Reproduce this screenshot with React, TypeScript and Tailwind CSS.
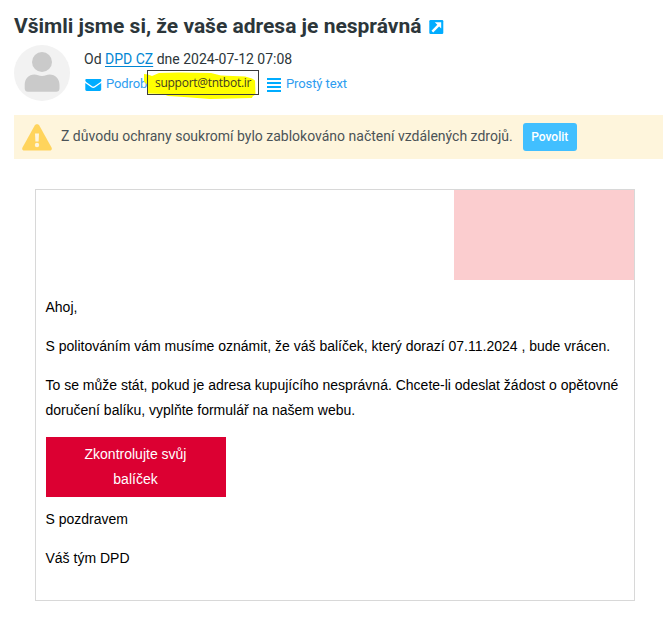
import type { ReactNode } from 'react';

function OpenIcon() {
  return (
    <svg width="15" height="15" viewBox="0 0 15 15" className="shrink-0">
      <rect x="0.3" y="0" width="14" height="14" rx="1.2" fill="#00acff" />
      <path d="M5.800 2.200h6.400v6.400l-2.100-2.100-5.900 5.900-1.700-1.700L8.300 4.700z" fill="#fff" />
    </svg>
  );
}

function Avatar() {
  return (
    <svg width="56" height="56" viewBox="0 0 56 56" className="shrink-0">
      <circle cx="28" cy="28" r="28" fill="#f2f2f2" />
      <circle cx="28" cy="17" r="10" fill="#cacaca" />
      <path
        d="M20.500 29.500c2.500 0 4.500 1.500 7.500 1.500s5-1.500 7.500-1.500C41.500 29.500 45.500 34 45.500 40v3.500c0 2-1.300 3.300-3.300 3.300H14c-2 0-3.300-1.300-3.300-3.300V40c0-6 3.800-10.500 9.800-10.500z"
        fill="#cacaca"
      />
    </svg>
  );
}

function MailIcon() {
  return (
    <svg width="17" height="12" viewBox="0 0 17 12" className="relative top-px shrink-0">
      <path d="M1.500 0h13.500c.9 0 1.400.5 1.400 1.200 0 .7-.5 1.500-1.200 2L9.700 7c-.9.700-2 .7-2.900 0L1.500 3.200C.8 2.700.3 1.900.3 1.300.3.500.8 0 1.500 0z" fill="#00acff" />
      <path d="M.3 4l6 4.200c1.200.9 2.700.9 3.900 0l6-4.200v6.600c0 .8-.6 1.400-1.400 1.400H1.700c-.8 0-1.400-.6-1.400-1.400z" fill="#00acff" />
    </svg>
  );
}

function LinesIcon() {
  return (
    <svg width="14" height="14" viewBox="0 0 14 14" className="relative top-px shrink-0">
      <path d="M0 0h14v2H0zM0 4h14v2H0zM0 8h14v2H0zM0 12h14v2H0z" fill="#00acff" />
    </svg>
  );
}

function WarningIcon() {
  return (
    <svg width="30" height="27" viewBox="0 0 30 27" className="shrink-0">
      <path d="M12.700 1.500c1-1.800 3.600-1.800 4.600 0l12.200 22c.8 1.500 0 3-1.700 3H2.200c-1.700 0-2.500-1.500-1.700-3z" fill="#ffd45c" />
      <path d="M13 9.500h4l-.4 8h-3.200z" fill="#fef5dc" />
      <circle cx="15" cy="21" r="2.200" fill="#fef5dc" />
    </svg>
  );
}

function AddressTooltip({ children }: { children: ReactNode }) {
  return (
    <div className="absolute left-[147px] top-[70px] h-[25px] w-[112px]">
      <svg width="116" height="32" viewBox="0 0 116 32" className="absolute -left-[3px] -top-px">
        <rect x="3.500" y="1.500" width="111" height="24" fill="#fff" />
        <path
          d="M0 5l4 .5 4 1.500 7-3 20-.5 32 .5 10 2.500 24 1 7 2 3 2 .5 14-3 2-.5 1.500-20 .5-22 .500-26-2-16-1-5-2-15-.5-1-2 1-6-4-4z"
          fill="#ff0"
        />
        <rect x="3.500" y="1.500" width="111" height="24" fill="none" stroke="#3b3b3b" />
      </svg>
      <span className="relative block whitespace-nowrap pl-2 font-['Open_Sans','Noto_Sans',sans-serif] text-[12px] leading-[25px] tracking-[-0.27px] text-[#3f3a20]">
        {children}
      </span>
    </div>
  );
}

function MessageHeader() {
  return (
    <header className="relative h-[115px] pl-[14px] pt-[12px]">
      <h1 className="flex h-[30px] items-center gap-[8px] whitespace-nowrap text-[21px] font-bold text-[#2c363a]">
        Všimli jsme si, že vaše adresa je nesprávná
        <OpenIcon />
      </h1>
      <div className="mt-[3px] flex gap-[14px]">
        <Avatar />
        <div className="pt-[4px] text-[#2c363a]">
          <div className="text-[14px] leading-5">
            Od{' '}
            <a className="text-[#0186d3] underline underline-offset-2">DPD CZ</a> dne 2024-07-12 07:08
          </div>
          <div className="mt-[6px] flex h-[18px] items-center text-[13px] text-[#2e9df0]">
            <span className="flex w-[183px] items-center gap-1 pl-px tracking-[-0.1px]">
              <MailIcon />
              Podrob
            </span>
            <LinesIcon />
            <span className="ml-[5px] tracking-[-0.1px]">Prostý text</span>
          </div>
        </div>
      </div>
      <AddressTooltip>support@tntbot.ir</AddressTooltip>
    </header>
  );
}

function PrivacyNotice() {
  return (
    <div className="ml-[14px] flex h-[44px] items-center bg-[#fef5dc] pl-2 text-[14px] text-[#4b5357]">
      <WarningIcon />
      <span className="ml-[9px] whitespace-nowrap pb-0.5">
        Z důvodu ochrany soukromí bylo zablokováno načtení vzdálených zdrojů.
      </span>
      <button className="ml-[10px] h-[28px] w-[54px] rounded-[3px] bg-[#41bfff] text-[12px] font-medium text-white">
        Povolit
      </button>
    </div>
  );
}

function MessageBody() {
  return (
    <main className="ml-[35px] mt-[30px] h-[412px] w-[600px] border border-[#d8d8d8] font-['Liberation_Sans',Arial,sans-serif] text-[14px] leading-[25px] text-black">
      <div className="ml-auto h-[90px] w-[180px] bg-[#fbcdcf]" />
      <div className="px-[10px] pt-[15px]">
        <p className="-ml-[0.5px]">Ahoj,</p>
        <p className="-ml-[0.5px] mt-[14px]">
          S politováním vám musíme oznámit, že váš balíček, který dorazí 07.11.2024 , bude vrácen.
        </p>
        <p className="-ml-[0.5px] mt-[14px]">
          To se může stát, pokud je adresa kupujícího nesprávná. Chcete-li odeslat žádost o opětovné
          <br />
          doručení balíku, vyplňte formulář na našem webu.
        </p>
        <a className="mt-[14px] block w-[180px] bg-[#dc0032] py-[5px] pl-[29px] pr-[30px] text-center text-white">
          Zkontrolujte svůj balíček
        </a>
        <p className="-ml-[0.5px] mt-[10px]">S pozdravem</p>
        <p className="-ml-[0.5px] mt-[14px]">Váš tým DPD</p>
      </div>
    </main>
  );
}

export default function App() {
  return (
    <div className="h-[625px] w-[663px] overflow-hidden bg-white font-['Roboto',sans-serif]">
      <MessageHeader />
      <PrivacyNotice />
      <MessageBody />
    </div>
  );
}
